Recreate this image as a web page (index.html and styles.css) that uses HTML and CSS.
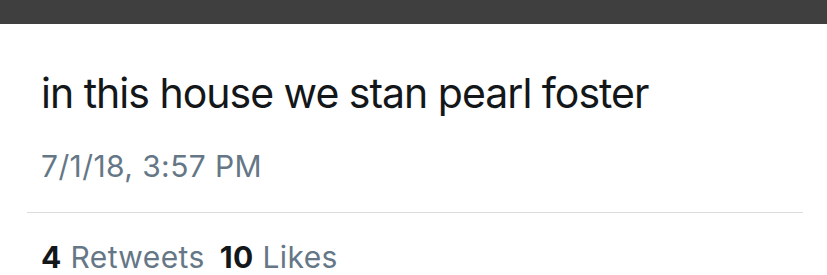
FILE: index.html
```html
<!DOCTYPE html>
<html lang="en">
<head>
    <meta charset="UTF-8">
    <title>Tweet</title>
    <link rel="stylesheet" href="styles.css">
</head>
<body>
    <div class="topbar"></div>
    <div class="tweet">
        <p class="tweet-text">in this house we stan pearl foster</p>
        <p class="tweet-date">7/1/18, 3:57 PM</p>
        <div class="stats">
            <span class="stat"><b>4</b> Retweets</span>
            <span class="stat"><b>10</b> Likes</span>
        </div>
    </div>
</body>
</html>
```

FILE: styles.css
```css
body {
    margin: 0;
    background-color: #fff;
    font-family: Inter, "Liberation Sans", Arial, sans-serif;
    overflow: hidden;
}
.topbar {
    height: 24px;
    background-color: #3f3f3f;
}
.tweet {
    padding: 0 24px 0 27px;
}
.tweet-text {
    margin: 0;
    padding: 43px 0 0 14px;
    font-size: 41px;
    line-height: 52px;
    color: #14171a;
    letter-spacing: -1px;
}
.tweet-date {
    margin: 0;
    padding: 29px 0 28px 14px;
    font-size: 30px;
    line-height: 36px;
    letter-spacing: 0.4px;
    color: #657786;
    border-bottom: 1px solid #dcdcdc;
}
.stats {
    padding: 26px 0 0 14px;
    font-size: 30px;
    line-height: 36px;
    letter-spacing: 0.4px;
    color: #657786;
    display: flex;
    gap: 15px;
}
.stat b {
    color: #14171a;
    font-weight: 700;
}
```
